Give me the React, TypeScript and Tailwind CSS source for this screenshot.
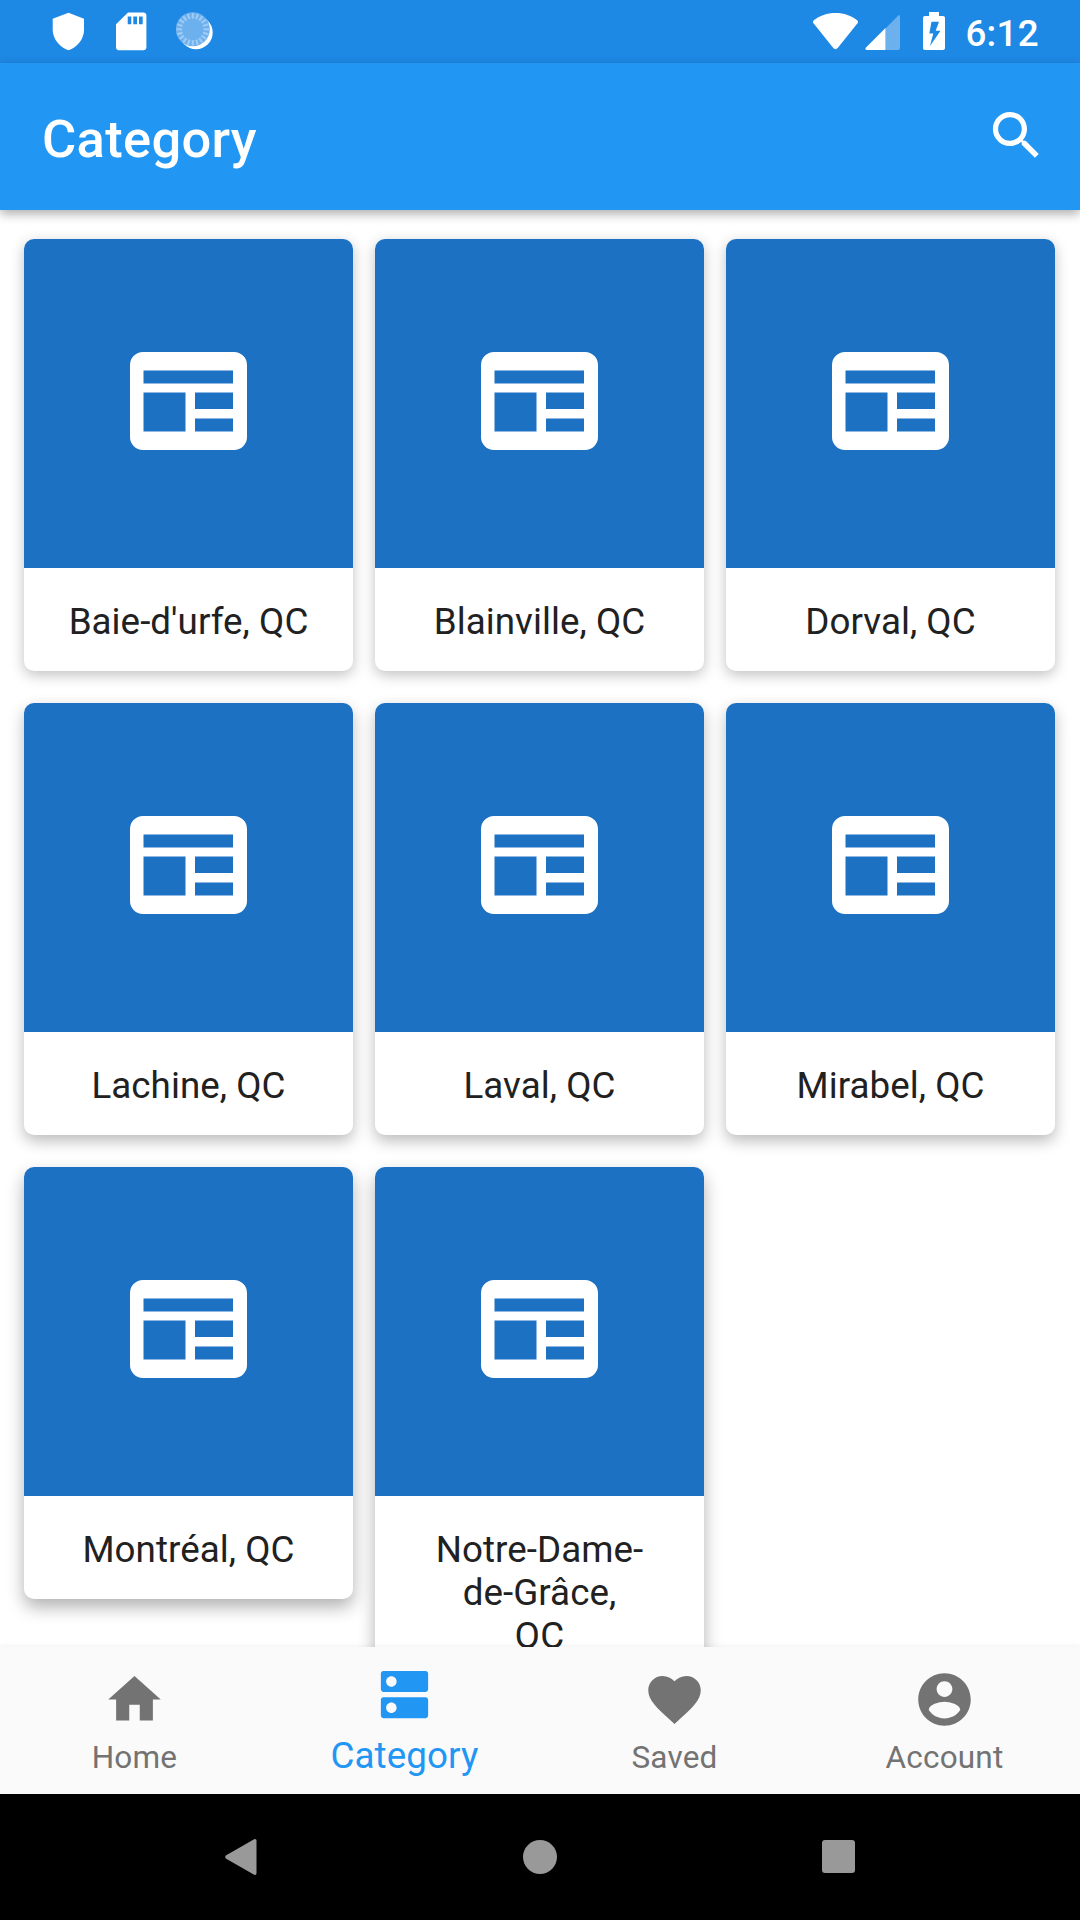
import type { ReactNode } from 'react';

interface Category {
  id: number;
  name: string;
}

interface Tab {
  label: string;
  path: string;
}

const categories: Category[] = [
  { id: 1, name: "Baie-d'urfe, QC" },
  { id: 2, name: 'Blainville, QC' },
  { id: 3, name: 'Dorval, QC' },
  { id: 4, name: 'Lachine, QC' },
  { id: 5, name: 'Laval, QC' },
  { id: 6, name: 'Mirabel, QC' },
  { id: 7, name: 'Montréal, QC' },
  { id: 8, name: 'Notre-Dame-\nde-Grâce,\nQC' },
];

// Shadows get longer further down the screen
const rowShadows = [
  'shadow-[0_4px_14px_rgba(0,0,0,0.25)]',
  'shadow-[0_6px_15px_rgba(0,0,0,0.27)]',
  'shadow-[0_8px_17px_rgba(0,0,0,0.31)]',
];

const tabs: Tab[] = [
  { label: 'Home', path: 'M10 20v-6h4v6h5v-8h3L12 3 2 12h3v8z' },
  {
    label: 'Category',
    path: 'M20 13H4c-.55 0-1 .45-1 1v6c0 .55.45 1 1 1h16c.55 0 1-.45 1-1v-6c0-.55-.45-1-1-1zM7 19c-1.1 0-2-.9-2-2s.9-2 2-2 2 .9 2 2-.9 2-2 2zM20 3H4c-.55 0-1 .45-1 1v6c0 .55.45 1 1 1h16c.55 0 1-.45 1-1V4c0-.55-.45-1-1-1zM7 9c-1.1 0-2-.9-2-2s.9-2 2-2 2 .9 2 2-.9 2-2 2z',
  },
  {
    label: 'Saved',
    path: 'M12 21.35l-1.45-1.32C5.4 15.36 2 12.28 2 8.5 2 5.42 4.42 3 7.5 3c1.74 0 3.41.81 4.5 2.09C13.09 3.81 14.76 3 16.5 3 19.58 3 22 5.42 22 8.5c0 3.78-3.4 6.86-8.55 11.54L12 21.35z',
  },
  {
    label: 'Account',
    path: 'M12 2C6.48 2 2 6.48 2 12s4.48 10 10 10 10-4.48 10-10S17.52 2 12 2zm0 3c1.66 0 3 1.34 3 3s-1.34 3-3 3-3-1.34-3-3 1.34-3 3-3zm0 14.2c-2.5 0-4.71-1.28-6-3.22.03-1.99 4-3.08 6-3.08 1.99 0 5.97 1.09 6 3.08-1.29 1.94-3.5 3.22-6 3.22z',
  },
];

const ticks = Array.from({ length: 20 }, (_, i) => i * 18);

function Icon({ className, viewBox = '0 0 24 24', children }: { className: string; viewBox?: string; children: ReactNode }) {
  return (
    <svg className={className} viewBox={viewBox} fill="currentColor">
      {children}
    </svg>
  );
}

function StatusBar() {
  return (
    <div className="h-[63px] shrink-0 bg-[#1e88e5] text-white flex items-start justify-between pl-[52px] pr-[41px]">
      <div className="flex items-start pt-3">
        {/* Shield */}
        <Icon className="w-8 h-[39px]" viewBox="0 0 32 39">
          <path d="M16.5 .8 32 6.8V18c0 9-7 17.500-15.500 20.200C8 35.500 .7 27 .7 18V6.800z" />
        </Icon>
        {/* SD card */}
        <Icon className="w-8 h-[39px] ml-8" viewBox="0 0 32 39">
          <path
            fillRule="evenodd"
            d="M12 .6h15.400c1.700 0 3 1.300 3 3v31.700c0 1.700-1.300 3-3 3H3c-1.700 0-3-1.300-3-3V12.200zM11.700 4.500v7.700h3.600V4.500zm5.600 0v7.700H21V4.500zm5.700 0v7.700h3.700V4.500z"
          />
        </Icon>
        {/* Sync spinner */}
        <Icon className="w-[38px] h-[39px] ml-7" viewBox="0 0 38 39">
          <circle cx="20" cy="20.500" r="16.700" />
          <circle cx="16.800" cy="17.300" r="17" fill="#6cb0ee" />
          <g stroke="#9ecaf4" strokeWidth="2.200">
            {ticks.map((angle) => (
              <path key={angle} d="M16.800 1v5.500" transform={`rotate(${angle} 16.800 17.300)`} />
            ))}
          </g>
        </Icon>
      </div>
      <div className="flex items-start pt-3">
        {/* Wifi */}
        <Icon className="w-[45px] h-[39px]" viewBox="0 0 45 39">
          <path d="M.8 8.300C6.500 3.600 14 1 22.500 1s16 2.600 21.700 7.300c.9.800 1 2 .3 2.900L24.700 36c-1.200 1.500-3.200 1.500-4.400 0L.5 11.200C-.2 10.300-.1 9.100.8 8.300z" />
        </Icon>
        {/* Signal */}
        <Icon className="w-9 h-[39px] ml-[7px]" viewBox="0 0 36 39">
          <path d="M20.500 16.500 33 3.700c.8-.8 2-.4 2 .9V36c0 1.200-.8 2-2 2H20.500z" opacity=".35" />
          <path d="M20.500 16v22H2c-1.600 0-2.200-1.300-1-2.500z" />
        </Icon>
        {/* Battery */}
        <Icon className="w-[22px] h-[39px] ml-[22px]" viewBox="0 0 22 39">
          <path
            fillRule="evenodd"
            d="M6 0h10v4h4c1.200 0 2 .8 2 2v30c0 1.200-.8 2-2 2H2c-1.200 0-2-.8-2-2V6c0-1.200.8-2 2-2h4zM8.500 9.800 6.300 21.500h4L7 34 17.500 18.700h-4.800L16 9.800z"
          />
        </Icon>
        <span className="ml-5 text-[36.75px] leading-[43px] font-medium tracking-[0.3px]">6:12</span>
      </div>
    </div>
  );
}

function AppBar() {
  return (
    <header className="relative z-10 h-[147px] shrink-0 bg-[#2196f3] text-white flex items-center justify-between pl-[42px] pr-8 shadow-[0_4px_10px_rgba(0,0,0,0.32)]">
      <h1 className="text-[52.5px] leading-[62px] font-medium tracking-[0.3px] pt-1">Category</h1>
      <Icon className="size-[63px] mb-[3px]">
        <path d="M15.500 14h-.79l-.28-.27C15.410 12.590 16 11.110 16 9.500 16 5.910 13.090 3 9.500 3S3 5.910 3 9.500 5.910 16 9.500 16c1.610 0 3.090-.59 4.230-1.570l.27.28v.79l5 4.990L20.490 19l-4.990-5zm-6 0C7.010 14 5 11.990 5 9.500S7.010 5 9.500 5 14 7.010 14 9.500 11.990 14 9.500 14z" />
      </Icon>
    </header>
  );
}

function CategoryCard({ name, shadow }: { name: string; shadow: string }) {
  return (
    <div className={`rounded-[10px] bg-white overflow-hidden ${shadow}`}>
      <div className="h-[329px] bg-[#1d71c2] text-white flex items-center justify-center">
        <Icon className="w-[117px] h-[98px] mt-[-5px]" viewBox="0 0 117 98">
          <path
            fillRule="evenodd"
            d="M13 0h91a13 13 0 0 1 13 13v72a13 13 0 0 1-13 13H13A13 13 0 0 1 0 85V13A13 13 0 0 1 13 0zM13.500 18.500v13h89.500v-13zM13.500 40.500v39h42v-39zm51.500 0v16.500h38V40.500zm0 26v13h38v-13z"
          />
        </Icon>
      </div>
      <p className="pt-8 pb-7 text-center text-[36.75px] leading-[43px] tracking-[0.05px] text-[#212121] whitespace-pre-line">
        {name}
      </p>
    </div>
  );
}

function BottomTabs({ active }: { active: string }) {
  return (
    <nav className="relative z-10 h-[147px] shrink-0 bg-[#fafafa] grid grid-cols-4 shadow-[0_-1px_6px_rgba(0,0,0,0.06)]">
      {tabs.map((tab) => {
        const selected = tab.label === active;
        return (
          <div
            key={tab.label}
            className={`flex flex-col items-center justify-between pr-px pb-4 ${selected ? 'pt-4 text-[#2196f3]' : 'pt-[21px] text-[#737373]'}`}
          >
            <Icon className="size-[63px]">
              <path d={tab.path} />
            </Icon>
            <span className={selected ? 'text-[36.75px] leading-[45px] tracking-[0.1px]' : 'text-[31.5px] leading-[40px] tracking-[0.2px]'}>
              {tab.label}
            </span>
          </div>
        );
      })}
    </nav>
  );
}

function SystemNav() {
  return (
    <div className="h-[126px] shrink-0 bg-black text-[#999] flex items-center justify-between pl-[225px] pr-[225px]">
      <Icon className="w-8 h-9" viewBox="0 0 32 36">
        <path d="M1.200 16.300 28.700.4c1.500-.8 2.800-.1 2.800 1.600v32c0 1.700-1.300 2.400-2.800 1.600L1.200 19.700C-.1 18.800-.1 17.200 1.200 16.300z" />
      </Icon>
      <div className="size-[34px] rounded-full bg-[#999] mb-px" />
      <div className="size-[33px] rounded-[3px] bg-[#999] mb-px" />
    </div>
  );
}

export default function App() {
  return (
    <div className="w-[1080px] h-[1920px] overflow-hidden flex flex-col bg-white font-['Roboto',sans-serif]">
      <StatusBar />
      <AppBar />
      <main className="flex-1 min-h-0 overflow-hidden px-6 pt-[29px]">
        <div className="grid grid-cols-[repeat(3,329px)] gap-x-[22px] gap-y-8 items-start">
          {categories.map((category, i) => (
            <CategoryCard key={category.id} name={category.name} shadow={rowShadows[Math.floor(i / 3)]} />
          ))}
        </div>
      </main>
      <BottomTabs active="Category" />
      <SystemNav />
    </div>
  );
}
